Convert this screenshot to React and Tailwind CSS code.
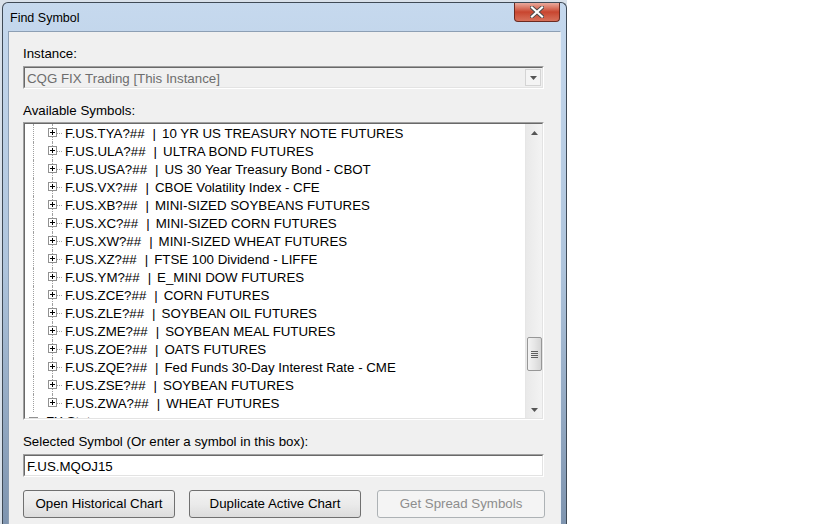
const symbols = [
  ["F.US.TYA?##", "10 YR US TREASURY NOTE FUTURES"],
  ["F.US.ULA?##", "ULTRA BOND FUTURES"],
  ["F.US.USA?##", "US 30 Year Treasury Bond - CBOT"],
  ["F.US.VX?##", "CBOE Volatility Index - CFE"],
  ["F.US.XB?##", "MINI-SIZED SOYBEANS FUTURES"],
  ["F.US.XC?##", "MINI-SIZED CORN FUTURES"],
  ["F.US.XW?##", "MINI-SIZED WHEAT FUTURES"],
  ["F.US.XZ?##", "FTSE 100 Dividend - LIFFE"],
  ["F.US.YM?##", "E_MINI DOW FUTURES"],
  ["F.US.ZCE?##", "CORN FUTURES"],
  ["F.US.ZLE?##", "SOYBEAN OIL FUTURES"],
  ["F.US.ZME?##", "SOYBEAN MEAL FUTURES"],
  ["F.US.ZOE?##", "OATS FUTURES"],
  ["F.US.ZQE?##", "Fed Funds 30-Day Interest Rate - CME"],
  ["F.US.ZSE?##", "SOYBEAN FUTURES"],
  ["F.US.ZWA?##", "WHEAT FUTURES"],
];

const font = { fontFamily: '"Liberation Sans", Arial, sans-serif' };

const PlusBox = () => (
  <svg width="9" height="9" viewBox="0 0 9 9" className="block shrink-0">
    <rect x="0.5" y="0.5" width="8" height="8" fill="#fff" stroke="#919191" />
    <path d="M2 4.5h5M4.5 2v5" stroke="#000" strokeWidth="1" />
  </svg>
);

const TreeRow = ({ code, desc, last }) => (
  <div className="flex h-[18px] shrink-0 items-center">
    <div className="w-[8px] shrink-0" />
    <div className="h-full w-[15px] shrink-0 border-l border-dotted border-[#a0a0a0]" />
    <div className="flex h-full w-[9px] shrink-0 flex-col items-center">
      <div className="h-[4px] w-0 border-l border-dotted border-[#a0a0a0]" />
      <PlusBox />
      <div className={`h-[5px] w-0 border-l border-dotted ${last ? "border-transparent" : "border-[#a0a0a0]"}`} />
    </div>
    <div className="w-[5px] shrink-0 border-t border-dotted border-[#a0a0a0]" />
    <span className="h-[18px] whitespace-pre pl-[3px] pt-[2px] text-[13.3px] leading-[16px] text-black">
      {code}
      <span className="ml-[8px]">|</span>
      <span className="ml-[6px]">{desc}</span>
    </span>
  </div>
);

const Sunken = ({ className, children }) => (
  <div className={`border border-[#a0a0a0] border-b-white border-r-white ${className}`}>
    <div className="flex h-full border border-[#696969] border-b-[#e3e3e3] border-r-[#e3e3e3]">{children}</div>
  </div>
);

const Arrow = ({ up }) => (
  <svg width="7" height="4" viewBox="0 0 7 4" className="block">
    <path d={up ? "M3.5 0L7 4H0z" : "M0 0h7L3.5 4z"} fill="#555" />
  </svg>
);

const Button = ({ label, disabled, className }) => (
  <div
    className={`flex h-[28px] items-center justify-center rounded-[3px] border text-[13.3px] ${
      disabled
        ? "border-[#adb2b5] bg-[#f4f4f4] text-[#8d8d8d]"
        : "border-[#707070] bg-gradient-to-b from-[#f2f2f2] via-[#ebebeb] to-[#dcdcdc] text-black"
    } ${className}`}
  >
    {label}
  </div>
);

export default function App() {
  return (
    <div className="flex h-[524px] w-[819px] overflow-hidden bg-white" style={font}>
      <div className="h-full w-[567px] shrink-0 bg-[#d9e1ea] pl-[2px] pt-[2px]">
        <div className="flex h-[530px] flex-col rounded-t-[6px] border border-b-0 border-[#3f4a56] bg-gradient-to-b from-[#c6d9ee] via-[#aec4dc] to-[#7d93ae] px-[5px]">
          {/* Title bar */}
          <div className="flex h-[28px] shrink-0 items-start justify-between">
            <span className="pl-[2px] pt-[8px] text-[12.5px] leading-[14px] text-black">Find Symbol</span>
            <div className="mr-[1px] flex h-[19px] w-[46px] items-center justify-center rounded-b-[4px] border border-t-0 border-[#6b2a21] bg-gradient-to-b from-[#e9a99c] via-[#c8452f] to-[#d6705a]">
              <svg width="14" height="12" viewBox="0 0 14 12">
                <path d="M2 1.5L12 10.5M12 1.5L2 10.5" stroke="#4a4a4a" strokeWidth="4" strokeLinecap="square" />
                <path d="M2 1.5L12 10.5M12 1.5L2 10.5" stroke="#fff" strokeWidth="2.2" strokeLinecap="square" />
              </svg>
            </div>
          </div>

          {/* Client area */}
          <div className="flex flex-1 flex-col border border-[#8d9fb4] border-b-0 border-r-[#e8eef5] bg-[#f0f0f0] px-[14px] text-[13.3px] text-black">
            <div className="mt-[14px] h-[16px] leading-[16px]">Instance:</div>
            <Sunken className="mt-[4px] h-[23px] w-[521px]">
              <div className="flex-1 pl-[2px] pt-[1px] leading-[19px] text-[#6d6d6d]">CQG FIX Trading [This Instance]</div>
              <div className="mr-[1px] mt-[1px] flex h-[17px] w-[16px] items-center justify-center border border-[#d4d4d4] bg-[#f4f4f4]">
                <Arrow />
              </div>
            </Sunken>

            <div className="mt-[14px] h-[16px] leading-[16px]">Available Symbols:</div>
            <Sunken className="mt-[3px] h-[298px] w-[521px]">
              <div className="flex flex-1 flex-col overflow-hidden bg-white">
                {symbols.map(([code, desc], i) => (
                  <TreeRow key={code} code={code} desc={desc} last={i === symbols.length - 1} />
                ))}
                <div className="flex h-[18px] shrink-0 items-center">
                  <div className="w-[4px] shrink-0" />
                  <PlusBox />
                  <span className="h-[18px] pl-[8px] pt-[2px] text-[13.3px] leading-[16px]">FX Stats</span>
                </div>
              </div>
              <div className="flex w-[17px] shrink-0 flex-col items-center border-l border-[#e6e6e6] bg-gradient-to-r from-[#e9e9e9] to-[#f3f3f3]">
                <div className="flex h-[17px] items-center justify-center">
                  <Arrow up />
                </div>
                <div className="flex-1">
                  <div className="mt-[196px] flex h-[34px] w-[15px] flex-col items-center justify-center gap-[1px] rounded-[2px] border border-[#979797] bg-gradient-to-r from-[#f3f3f3] via-[#e6e6e6] to-[#d6d6d6]">
                    {[0, 1, 2, 3].map((k) => (
                      <div key={k} className="h-[1px] w-[7px] bg-[#5e5e5e]" />
                    ))}
                  </div>
                </div>
                <div className="flex h-[17px] items-center justify-center">
                  <Arrow />
                </div>
              </div>
            </Sunken>

            <div className="mt-[14px] h-[16px] leading-[16px]">Selected Symbol (Or enter a symbol in this box):</div>
            <Sunken className="mt-[4px] h-[23px] w-[521px]">
              <div className="flex-1 bg-white pl-[2px] pt-[1px] leading-[19px]">F.US.MQOJ15</div>
            </Sunken>

            <div className="mt-[13px] flex">
              <Button label="Open Historical Chart" className="w-[152px]" />
              <Button label="Duplicate Active Chart" className="ml-[14px] w-[172px]" />
              <Button label="Get Spread Symbols" disabled className="ml-[16px] w-[168px]" />
            </div>
          </div>
        </div>
      </div>
      <div className="flex-1 bg-white" />
    </div>
  );
}
